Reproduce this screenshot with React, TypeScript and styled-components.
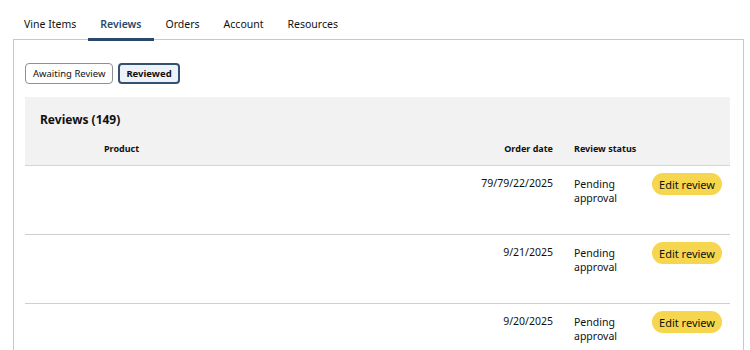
import React from "react";
import styled, { createGlobalStyle } from "styled-components";

const GlobalStyle = createGlobalStyle`
  body {
    margin: 0;
    background: #fff;
    font-family: "Noto Sans", "Open Sans", sans-serif;
    color: #0f1111;
  }
`;

const Page = styled.div`
  width: 750px;
  padding-top: 10px;
`;

const Tabs = styled.nav`
  display: flex;
  padding-left: 12px;
`;

const Tab = styled.a<{ $active?: boolean }>`
  padding: 7px 12px 6px;
  font-size: 10.5px;
  line-height: 15px;
  color: ${(p) => (p.$active ? "#2a4a6b" : "#0f1111")};
  font-weight: ${(p) => (p.$active ? 600 : 400)};
  border-bottom: 3px solid ${(p) => (p.$active ? "#2a4a6b" : "transparent")};
  margin-bottom: -2px;
  position: relative;
  z-index: 1;
`;

const Panel = styled.section`
  margin: 0 6px 0 13px;
  border: 1px solid #c9c9c9;
  border-bottom: none;
  padding: 23px 13px 0 11px;
`;

const Filters = styled.div`
  display: flex;
  gap: 5px;
  margin-bottom: 13px;
`;

const FilterButton = styled.button<{ $selected?: boolean }>`
  font-family: inherit;
  font-size: 9.5px;
  height: 21px;
  padding: 0 ${(p) => (p.$selected ? "6px" : "7px")};
  border-radius: 4px;
  color: #0f1111;
  font-weight: ${(p) => (p.$selected ? 700 : 400)};
  background: ${(p) => (p.$selected ? "#edf3f8" : "#fff")};
  border: ${(p) => (p.$selected ? "2px solid #34526f" : "1px solid #8d9096")};
`;

const Table = styled.div`
  display: flex;
  flex-direction: column;
`;

const TableHead = styled.div`
  background: #f2f2f2;
  border-bottom: 1px solid #d5d5d5;
`;

const Title = styled.h2`
  margin: 0;
  padding: 14px 0 0 15px;
  height: 31px;
  box-sizing: border-box;
  font-size: 12px;
  font-weight: 700;
`;

const Row = styled.div<{ $head?: boolean }>`
  display: grid;
  grid-template-columns: 438px 90px 99px 70px;
  padding-right: 7px;
  height: ${(p) => (p.$head ? "37px" : "69px")};
  border-bottom: ${(p) => (p.$head ? "none" : "1px solid #cfcfcf")};
  font-size: ${(p) => (p.$head ? "9px" : "10.5px")};
  font-weight: ${(p) => (p.$head ? 700 : 400)};
  box-sizing: border-box;
`;

const ProductCell = styled.div<{ $head?: boolean }>`
  padding: ${(p) => (p.$head ? "14px 0 0 79px" : "0")};
`;

const DateCell = styled.div<{ $head?: boolean }>`
  text-align: right;
  padding-top: ${(p) => (p.$head ? "14px" : "10px")};
  white-space: nowrap;
`;

const StatusCell = styled.div<{ $head?: boolean }>`
  padding: ${(p) => (p.$head ? "14px" : "11px")} 0 0 21px;
  line-height: 14px;
  white-space: ${(p) => (p.$head ? "nowrap" : "normal")};
`;

const ActionCell = styled.div`
  padding-top: 7px;
`;

const EditButton = styled.button`
  width: 70px;
  height: 22px;
  border: none;
  border-radius: 11px;
  background: #f5d64e;
  font-family: inherit;
  font-size: 11px;
  color: #0f1111;
  padding: 0;
`;

const reviews = [
  { date: "79/79/22/2025" },
  { date: "9/21/2025" },
  { date: "9/20/2025" },
];

export default function App() {
  return (
    <Page>
      <GlobalStyle />
      <Tabs>
        <Tab>Vine Items</Tab>
        <Tab $active>Reviews</Tab>
        <Tab>Orders</Tab>
        <Tab>Account</Tab>
        <Tab>Resources</Tab>
      </Tabs>
      <Panel>
        <Filters>
          <FilterButton>Awaiting Review</FilterButton>
          <FilterButton $selected>Reviewed</FilterButton>
        </Filters>
        <Table>
          <TableHead>
            <Title>Reviews (149)</Title>
            <Row $head>
              <ProductCell $head>Product</ProductCell>
              <DateCell $head>Order date</DateCell>
              <StatusCell $head>Review status</StatusCell>
              <div />
            </Row>
          </TableHead>
          {reviews.map((r) => (
            <Row key={r.date}>
              <ProductCell />
              <DateCell>{r.date}</DateCell>
              <StatusCell>
                Pending
                <br />
                approval
              </StatusCell>
              <ActionCell>
                <EditButton>Edit review</EditButton>
              </ActionCell>
            </Row>
          ))}
        </Table>
      </Panel>
    </Page>
  );
}
